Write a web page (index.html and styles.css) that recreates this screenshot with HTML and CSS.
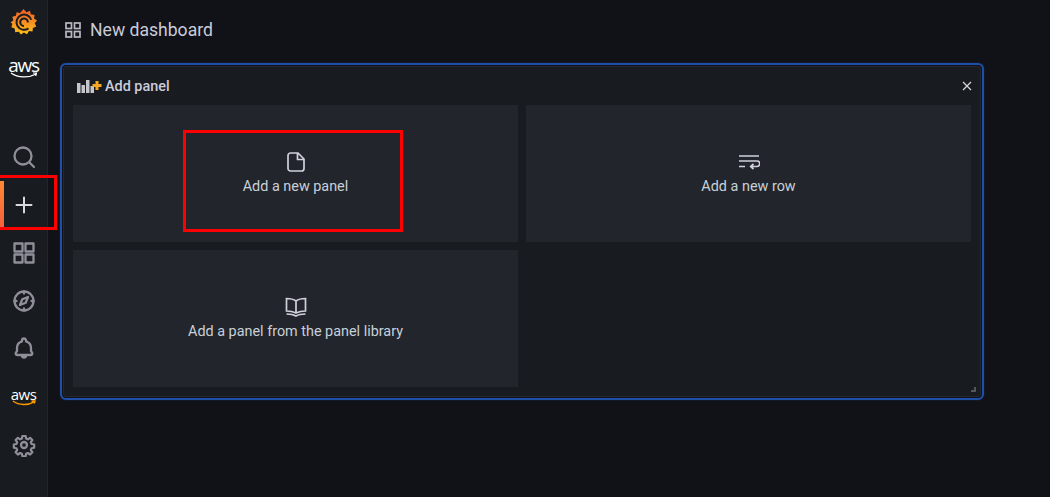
FILE: index.html
```html
<!doctype html>
<html>
	<head>
		<meta charset='utf-8'>
		<title>New dashboard</title>
		<link rel="stylesheet" href="styles.css">
	</head>
	<body>
		<nav class='sidebar'>
			<div class='logo'>
				<svg width='28' height='30' viewBox='0 0 28 30'>
					<defs>
						<linearGradient id='logo-grad' x1='0' y1='1' x2='0' y2='0'>
							<stop offset='0' stop-color='#fcc21a'/>
							<stop offset='1' stop-color='#f05a28'/>
						</linearGradient>
					</defs>
					<path fill='url(#logo-grad)' d='M13.500 2l3 3.200 3.400-1.500 1 3.600 3.700.6-.6 3.600 3 2-2.300 2.800 1.600 3.200-3.400 1.400-.4 3.700-3.600-.5-1.900 3.200-3.100-1.800-3 2.100-2.100-2.900-3.600.5-.5-3.600-3.400-1.400 1.100-3.500L.5 15.500l2.900-2.300-1.100-3.500 3.600-.9.700-3.600 3.500.9z'/>
					<path fill='none' stroke='#1b1d22' stroke-width='2' d='M21.300 12.800a7.600 7.600 0 1 0-2.800 8.600'/>
					<path fill='none' stroke='#1b1d22' stroke-width='2' d='M17.800 15.500a3.800 3.800 0 1 0-3.800 3.500'/>
				</svg>
			</div>
			<div class='aws-top'>
				<span class='aws-word'>aws</span>
				<svg width='28' height='6' viewBox='0 0 28 6'><path fill='none' stroke='#fff' stroke-width='1.200' d='M1 1c7 5 18 5 25 1M23 1h3.500l-.8 3'/></svg>
			</div>
			<div class='nav-items'>
				<div class='nav-item'>
					<svg width='24' height='24' viewBox='0 0 24 24' class='ic'><circle cx='11' cy='11' r='8.500'/><path d='M17.500 17.500l4.500 4.500'/></svg>
				</div>
				<div class='nav-item active'>
					<svg width='24' height='24' viewBox='0 0 24 24' class='ic ic-light'><path d='M12 4.500v15M4.500 12h15'/></svg>
				</div>
				<div class='nav-item'>
					<svg width='24' height='24' viewBox='0 0 24 24' class='ic'><rect x='2.500' y='2.500' width='8' height='8'/><rect x='13.500' y='2.500' width='8' height='8'/><rect x='2.500' y='13.500' width='8' height='8'/><rect x='13.500' y='13.500' width='8' height='8'/></svg>
				</div>
				<div class='nav-item'>
					<svg width='24' height='24' viewBox='0 0 24 24' class='ic'><circle cx='12' cy='12' r='9.500'/><path d='M16 8l-2.300 5.700L8 16l2.300-5.700z'/><path d='M12 2.500v2M12 19.500v2M2.500 12h2M19.500 12h2'/></svg>
				</div>
				<div class='nav-item'>
					<svg width='24' height='24' viewBox='0 0 24 24' class='ic'><path d='M5.500 18h13c1 0 1.800-.8 1.800-1.700 0-1-.8-1.500-1.300-2V11a7 7 0 0 0-5-6.700V3.500a2 2 0 0 0-4 0v.8A7 7 0 0 0 5 11v3.300c-.5.500-1.300 1-1.300 2 0 .9.800 1.700 1.800 1.700zM10 18.500a2 2 0 0 0 4 0'/></svg>
				</div>
				<div class='nav-item aws-small'>
					<span class='aws-word'>aws</span>
					<svg width='24' height='6' viewBox='0 0 24 6'><path fill='none' stroke='#f90' stroke-width='1.400' d='M1 1c6 4.500 15 4.500 21 .8M19.500 1H23l-.8 2.500'/></svg>
				</div>
				<div class='nav-item'>
					<svg width='24' height='24' viewBox='0 0 24 24' class='ic'><circle cx='12' cy='12' r='3'/><path d='M10.300 2.500h3.400l.5 2.700 1.900.8 2.300-1.600 2.400 2.400-1.600 2.300.8 1.900 2.700.5v3.400l-2.700.5-.8 1.900 1.600 2.300-2.400 2.400-2.300-1.600-1.900.8-.5 2.700h-3.400l-.5-2.700-1.900-.8-2.300 1.600-2.400-2.400 1.600-2.300-.8-1.900-2.700-.5v-3.400l2.700-.5.8-1.900-1.600-2.300 2.400-2.400 2.300 1.600 1.900-.8z' transform='translate(12 12) scale(.95) translate(-12 -12)'/></svg>
				</div>
			</div>
		</nav>
		<main class='main'>
			<header class='page-head'>
				<svg width='16' height='16' viewBox='0 0 16 16' class='ic-head'><rect x='1' y='1' width='5.500' height='5.500'/><rect x='9.500' y='1' width='5.500' height='5.500'/><rect x='1' y='9.500' width='5.500' height='5.500'/><rect x='9.500' y='9.500' width='5.500' height='5.500'/></svg>
				<span class='page-title'>New dashboard</span>
			</header>
			<section class='panel-focus'>
				<div class='panel'>
					<div class='panel-head'>
						<svg width='26' height='16' viewBox='0 0 26 16'>
							<path fill='#c4c6cc' d='M0 5h3.500v10H0zM4.500 7H8v8H4.500zM9 2h3.500v13H9zM13.500 8H17v7h-3.500z'/>
							<path stroke='#f5a623' stroke-width='3' fill='none' d='M20 3v9M15.500 7.500h9'/>
						</svg>
						<span class='panel-title'>Add panel</span>
						<svg class='close' width='10' height='10' viewBox='0 0 10 10'><path d='M1 1l8 8M9 1l-8 8'/></svg>
					</div>
					<div class='cards'>
						<div class='card'>
							<div class='card-icon'><svg width='18' height='20' viewBox='0 0 18 20' class='ic-card'><path d='M3.500 1h7.500l6 6v9.500a2.500 2.500 0 0 1-2.500 2.500h-11a2.500 2.500 0 0 1-2.500-2.500v-13a2.500 2.500 0 0 1 2.500-2.500zM10.500 1v6.500h6.500'/></svg></div>
							<span>Add a new panel</span>
						</div>
						<div class='card'>
							<div class='card-icon'><svg width='22' height='16' viewBox='0 0 22 16' class='ic-card'><path d='M1 2h20M1 7h18a2.600 2.600 0 0 1 0 5.500h-6M15.500 10l-2.800 2.500 2.800 2.500M1 12.500h6'/></svg></div>
							<span>Add a new row</span>
						</div>
						<div class='card'>
							<div class='card-icon'><svg width='22' height='20' viewBox='0 0 22 20' class='ic-card'><path d='M11 4C9 2.500 6 1.500 1.500 1.500v12.500c4.500 0 7.500 1 9.500 2 2-1 5-2 9.500-2V1.500C16 1.500 13 2.500 11 4zM11 4v12M1.500 17c4.500 0 7.500.8 9.500 2 2-1.200 5-2 9.500-2'/></svg></div>
							<span>Add a panel from the panel library</span>
						</div>
					</div>
					<div class='resize-handle'></div>
				</div>
			</section>
		</main>
		<div class='mark mark-nav'></div>
		<div class='mark mark-card'></div>
	</body>
</html>
```

FILE: styles.css
```css
html, body {
	height: 100%;
}

body {
	margin: 0;
	display: flex;
	overflow: hidden;
	position: relative;
	background: #111217;
	color: #c7d0d9;
	font-family: Roboto, "Liberation Sans", sans-serif;
	font-size: 14.4px;
}

/* sidebar */

.sidebar {
	width: 47px;
	flex: none;
	background: #181b1f;
	border-right: 1px solid #22252b;
}

.logo {
	height: 44px;
	padding-top: 7px;
	box-sizing: border-box;
	display: flex;
	justify-content: center;
}

.aws-top {
	height: 89px;
	display: flex;
	flex-direction: column;
	align-items: center;
	padding-top: 14px;
	box-sizing: border-box;
}

.aws-word {
	color: #fff;
	font-family: "Open Sans", sans-serif;
	font-size: 19px;
	line-height: 15px;
	letter-spacing: -1.200px;
}

.aws-small .aws-word {
	font-size: 15px;
	line-height: 11px;
	letter-spacing: -0.500px;
}

.aws-top svg {
	margin-top: -1px;
}

.nav-item {
	height: 48px;
	display: flex;
	flex-direction: column;
	align-items: center;
	justify-content: center;
	position: relative;
}

.nav-item.active::before {
	content: '';
	position: absolute;
	left: 0;
	top: 0;
	bottom: 0;
	width: 4px;
	background: linear-gradient(#ff8833, #f55f3e);
}

.ic {
	fill: none;
	stroke: #8e8f99;
	stroke-width: 2.300;
	stroke-linecap: round;
	stroke-linejoin: round;
}

.ic-light {
	stroke: #d8d9e0;
	stroke-width: 2;
}

/* main */

.main {
	flex: 1;
	padding: 0 66px 0 12px;
	min-width: 0;
}

.page-head {
	height: 59px;
	display: flex;
	align-items: center;
	padding-left: 5px;
	gap: 9px;
}

.ic-head {
	fill: none;
	stroke: #b8b9c2;
	stroke-width: 1.700;
}

.page-title {
	font-size: 17.6px;
	color: #c9ccd8;
}

.panel-focus {
	margin-top: 4px;
	height: 337px;
	box-sizing: border-box;
	border: 2px solid #1f4fa8;
	border-radius: 6px;
	box-shadow: 0 0 1px #1f4fa8;
	padding: 1px;
}

.panel {
	height: 100%;
	box-sizing: border-box;
	background: #181b1f;
	border: 1px solid #25282e;
	border-radius: 3px;
	padding: 0 9px 9px 9px;
	position: relative;
	display: flex;
	flex-direction: column;
}

.panel-head {
	height: 38px;
	flex: none;
	display: flex;
	align-items: center;
	padding-left: 4px;
	gap: 2px;
}

.panel-title {
	font-weight: 500;
	color: #ccccdc;
}

.close {
	margin-left: auto;
	margin-right: -1px;
	fill: none;
	stroke: #d8d9e0;
	stroke-width: 1.200;
}

.cards {
	flex: 1;
	display: grid;
	grid-template-columns: 1fr 1fr;
	grid-template-rows: 1fr 1fr;
	gap: 8px;
}

.card {
	background: #22252b;
	display: flex;
	flex-direction: column;
	align-items: center;
	justify-content: center;
	gap: 5px;
	color: #c7d0d9;
}

.card-icon {
	height: 20px;
	display: flex;
	align-items: center;
}

.card-icon svg {
	margin-bottom: 2px;
}

.ic-card {
	fill: none;
	stroke: #d0d1db;
	stroke-width: 1.700;
}

.resize-handle {
	position: absolute;
	right: 4px;
	bottom: 4px;
	width: 5px;
	height: 5px;
	border-right: 2px solid #55575d;
	border-bottom: 2px solid #55575d;
	box-sizing: border-box;
}

/* red annotation boxes */

.mark {
	position: absolute;
	border: 3px solid #f00;
	box-sizing: border-box;
}

.mark-nav {
	left: -3px;
	top: 175px;
	width: 60px;
	height: 55px;
}

.mark-card {
	left: 183px;
	top: 130px;
	width: 220px;
	height: 102px;
}
```
